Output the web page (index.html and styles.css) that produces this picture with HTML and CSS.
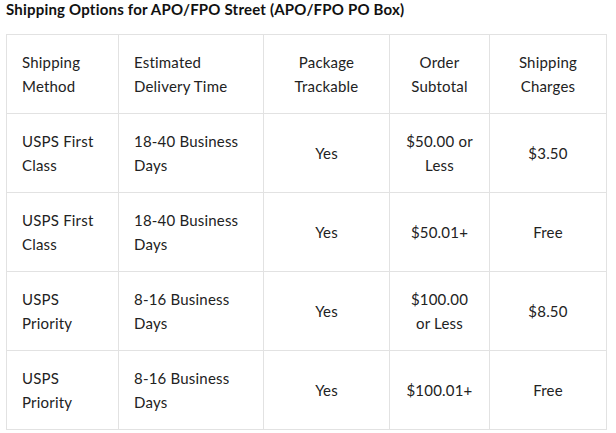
FILE: index.html
```html
<!DOCTYPE html>
<html>
<head>
<meta charset="utf-8">
<link rel="stylesheet" href="styles.css">
</head>
<body>
<div class="page">
  <h2 class="title">Shipping Options for APO/FPO Street (APO/FPO PO Box)</h2>
  <table class="ship">
    <colgroup>
      <col class="c1"><col class="c2"><col class="c3"><col class="c4"><col class="c5">
    </colgroup>
    <tr>
      <td class="l">Shipping Method</td>
      <td class="l">Estimated Delivery Time</td>
      <td>Package Trackable</td>
      <td>Order Subtotal</td>
      <td>Shipping Charges</td>
    </tr>
    <tr>
      <td class="l">USPS First Class</td>
      <td class="l">18-40 Business Days</td>
      <td>Yes</td>
      <td>$50.00 or Less</td>
      <td>$3.50</td>
    </tr>
    <tr>
      <td class="l">USPS First Class</td>
      <td class="l">18-40 Business Days</td>
      <td>Yes</td>
      <td>$50.01+</td>
      <td>Free</td>
    </tr>
    <tr>
      <td class="l">USPS Priority</td>
      <td class="l">8-16 Business Days</td>
      <td>Yes</td>
      <td>$100.00 or Less</td>
      <td>$8.50</td>
    </tr>
    <tr>
      <td class="l">USPS Priority</td>
      <td class="l">8-16 Business Days</td>
      <td>Yes</td>
      <td>$100.01+</td>
      <td>Free</td>
    </tr>
  </table>
</div>
</body>
</html>
```
FILE: styles.css
```css
html, body { margin: 0; padding: 0; background: #fff; }
.page {
  padding: 0 6px;
  font-family: "Lato", "DejaVu Sans", sans-serif;
  color: #222;
}
.title {
  margin: 0;
  font-size: 15px;
  line-height: 18px;
  font-weight: bold;
  letter-spacing: 0.2px;
  color: #111;
  height: 34px;
}
.ship {
  border-collapse: collapse;
  table-layout: fixed;
  width: 600px;
  font-size: 15px;
  line-height: 24px;
  letter-spacing: 0.2px;
}
.c1 { width: 112px; }
.c2 { width: 145px; }
.c3 { width: 126px; }
.c4 { width: 100px; }
.c5 { width: 117px; }
.ship td {
  border: 1px solid #e2e2e2;
  height: 79px;
  box-sizing: border-box;
  padding: 0 15px;
  text-align: center;
  vertical-align: middle;
}
.ship td.l { text-align: left; }
```
